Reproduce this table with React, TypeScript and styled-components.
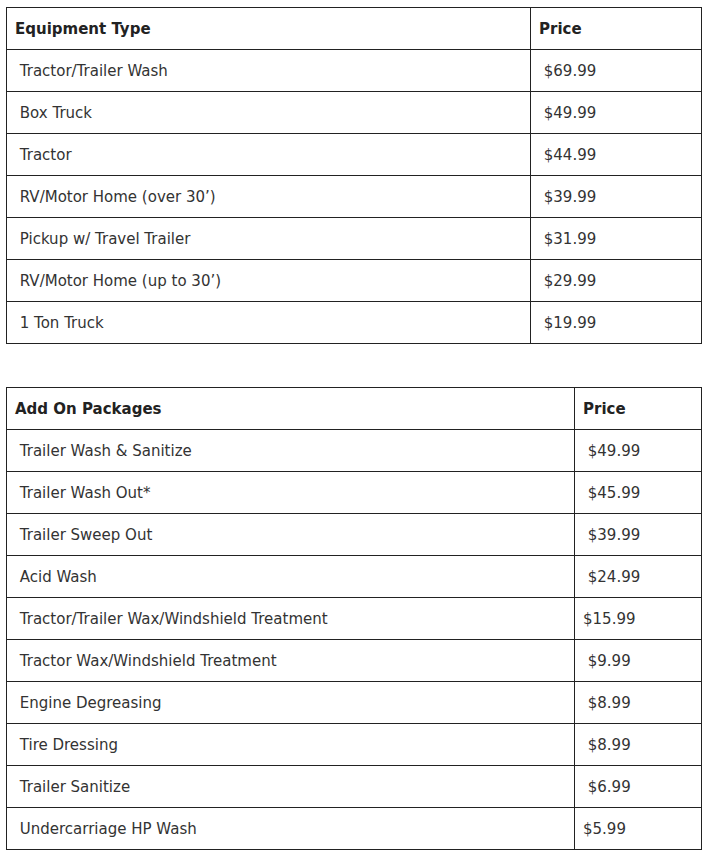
import React from "react";
import styled, { createGlobalStyle } from "styled-components";

const Global = createGlobalStyle`
  html, body { margin: 0; padding: 0; background: #ffffff; }
  body { font-family: Verdana, "DejaVu Sans", sans-serif; }
`;

const Page = styled.div`
  padding: 7px 11px 8px 6px;
  display: flex;
  flex-direction: column;
  gap: 43px;
`;

const Table = styled.table`
  width: 696px;
  border-collapse: collapse;
  border: 1px solid #222;
  font-size: 15px;
  line-height: 21px;
`;

const HeadCell = styled.th<{ $w?: number }>`
  text-align: left;
  font-weight: bold;
  color: #222;
  padding: 11px 8px 9px;
  border: 1px solid #222;
  width: ${(p) => (p.$w ? `${p.$w}px` : "auto")};
`;

const Cell = styled.td`
  color: #333;
  padding: 11px 8px 9px;
  border: 1px solid #222;
`;

type Row = [string, string];

const equipment: Row[] = [
  ["\u00a0Tractor/Trailer Wash", "\u00a0$69.99"],
  ["\u00a0Box Truck", "\u00a0$49.99"],
  ["\u00a0Tractor", "\u00a0$44.99"],
  ["\u00a0RV/Motor Home (over 30\u2019)", "\u00a0$39.99"],
  ["\u00a0Pickup w/ Travel Trailer", "\u00a0$31.99"],
  ["\u00a0RV/Motor Home (up to 30\u2019)", "\u00a0$29.99"],
  ["\u00a01 Ton Truck", "\u00a0$19.99"],
];

const addons: Row[] = [
  ["\u00a0Trailer Wash & Sanitize", "\u00a0$49.99"],
  ["\u00a0Trailer Wash Out*", "\u00a0$45.99"],
  ["\u00a0Trailer Sweep Out", "\u00a0$39.99"],
  ["\u00a0Acid Wash", "\u00a0$24.99"],
  ["\u00a0Tractor/Trailer Wax/Windshield Treatment", "$15.99"],
  ["\u00a0Tractor Wax/Windshield Treatment", "\u00a0$9.99"],
  ["\u00a0Engine Degreasing", "\u00a0$8.99"],
  ["\u00a0Tire Dressing", "\u00a0$8.99"],
  ["\u00a0Trailer Sanitize", "\u00a0$6.99"],
  ["\u00a0Undercarriage HP Wash", "$5.99"],
];

function PriceTable({ title, firstWidth, rows }: { title: string; firstWidth: number; rows: Row[] }) {
  return (
    <Table>
      <thead>
        <tr>
          <HeadCell $w={firstWidth}>{title}</HeadCell>
          <HeadCell>Price</HeadCell>
        </tr>
      </thead>
      <tbody>
        {rows.map(([name, price]) => (
          <tr key={name}>
            <Cell>{name}</Cell>
            <Cell>{price}</Cell>
          </tr>
        ))}
      </tbody>
    </Table>
  );
}

export default function App() {
  return (
    <>
      <Global />
      <Page>
        <PriceTable title="Equipment Type" firstWidth={507} rows={equipment} />
        <PriceTable title="Add On Packages" firstWidth={551} rows={addons} />
      </Page>
    </>
  );
}
